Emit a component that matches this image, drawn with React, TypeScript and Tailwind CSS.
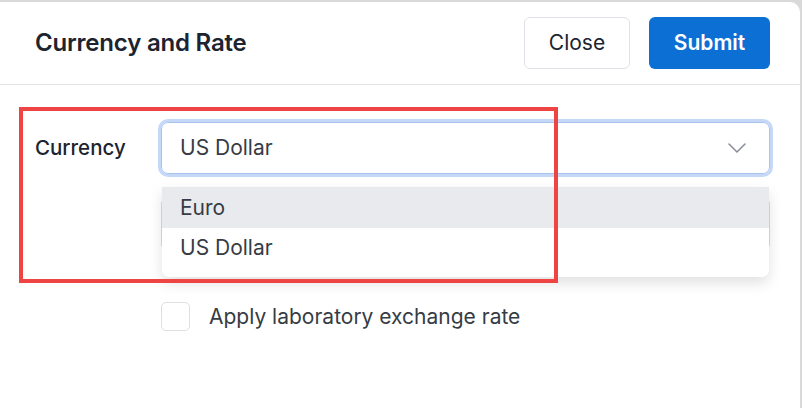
import { ChevronDown } from 'lucide-react';

const options = ['Euro', 'US Dollar'];

export default function App() {
  return (
    <div className="w-[802px] h-[408px] bg-[#d9d9d9] pt-[2px] overflow-hidden" style={{ fontFamily: 'Inter, "Liberation Sans", sans-serif' }}>
      <div className="h-full bg-white rounded-tr-[10px] mr-[2px]">
        {/* Header */}
        <div className="h-[83px] flex items-center justify-between pl-[35px] pr-[30px] border-b border-[#e2e4e8]">
          <h2 className="text-[24px] font-semibold text-[#1c2430] tracking-[-0.2px]">Currency and Rate</h2>
          <div className="flex gap-[19px]">
            <button className="w-[106px] h-[52px] rounded-[6px] border border-[#dfe2e6] text-[21px] text-[#1c2430]">Close</button>
            <button className="w-[121px] h-[52px] rounded-[6px] bg-[#0b6fd4] text-[21px] font-semibold text-white">Submit</button>
          </div>
        </div>

        {/* Body */}
        <div className="relative pl-[35px] pr-[30px] pt-[37px]">
          <div className="flex items-center">
            <label className="w-[126px] text-[20.5px] font-medium text-[#1c2430]">Currency</label>
            <div className="relative flex-1">
              <div className="h-[52px] flex items-center justify-between rounded-[7px] border border-[#a9c4ec] ring-[3px] ring-[#c5d8f7] pl-[18px] pr-[16px]">
                <span className="text-[21px] text-[#363c45]">US Dollar</span>
                <ChevronDown size={32} strokeWidth={1.2} className="text-[#8a8f96]" />
              </div>
              {/* open option list */}
              <div className="absolute left-[1px] right-[1px] top-[65px] z-10 bg-white rounded-b-[7px] shadow-[0_6px_14px_rgba(0,0,0,0.12)] pb-[9px]">
                {options.map((opt, i) => (
                  <div key={opt} className={`flex items-center pl-[18px] text-[21px] text-[#363c45] ${i === 0 ? 'h-[41px] bg-[#e8eaed]' : 'h-[40px]'}`}>
                    {opt}
                  </div>
                ))}
              </div>
            </div>
          </div>

          {/* rate field, covered by the list */}
          <div className="flex items-center mt-[24px]">
            <div className="w-[126px]" />
            <div className="flex-1 h-[52px] rounded-[6px] border border-[#d8dbe0]" />
          </div>

          <div className="flex items-center mt-[51px] pl-[126px]">
            <span className="w-[29px] h-[29px] rounded-[5px] border border-[#dcdfe3] bg-white" />
            <span className="ml-[19px] text-[21px] text-[#363c45]">Apply laboratory exchange rate</span>
          </div>

          {/* highlight box */}
          <div className="absolute left-[19px] top-[22px] w-[539px] h-[176px] border-[4px] border-[#ef4444] pointer-events-none z-20" />
        </div>
      </div>
    </div>
  );
}
